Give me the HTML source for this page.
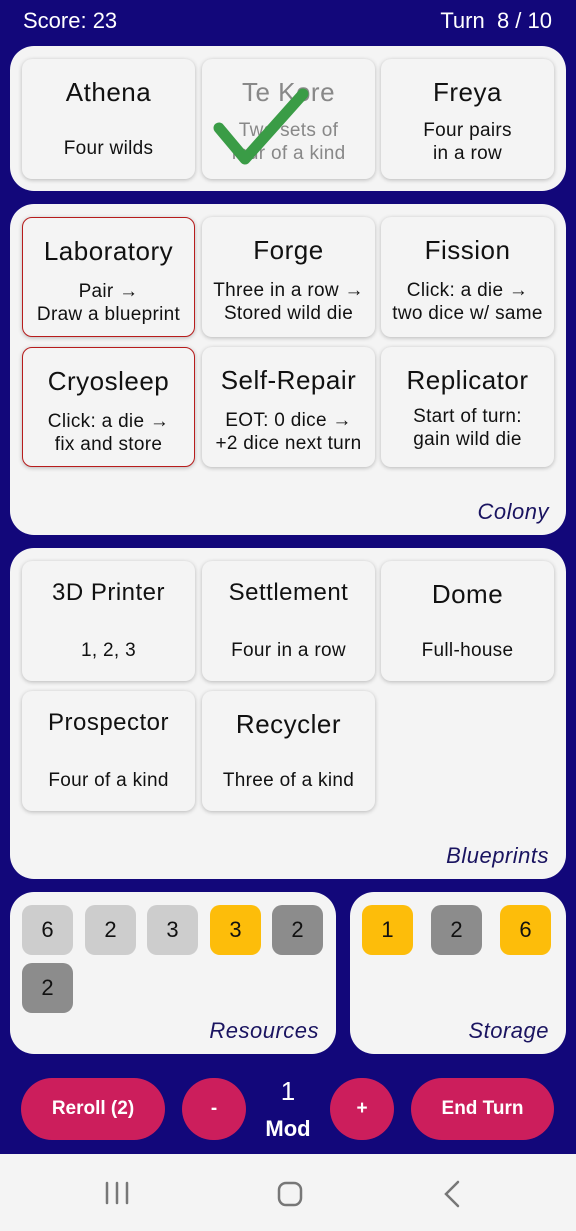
<!DOCTYPE html><html><head><style>
body{margin:0;width:576px;height:1231px;background:#12077a;font-family:"Liberation Sans",sans-serif;position:relative;overflow:hidden}
.a{position:absolute}
.p{position:absolute;background:#f4f4f4;border-radius:24px}
.c{position:absolute;width:173px;height:120px;background:#f4f4f4;border-radius:10px;box-shadow:0 1px 4px rgba(0,0,0,.25);text-align:center;color:#111}
.c .t{position:absolute;top:18px;left:0;right:0;font-size:26px;letter-spacing:.5px}
.c .s{position:absolute;left:0;right:0;font-size:19px;line-height:23px;letter-spacing:.3px}
.r{border:1.5px solid #b71c1c;box-sizing:border-box}
.lbl{position:absolute;font-style:italic;color:#1a1460;font-size:22px;letter-spacing:.5px}
.d{position:absolute;width:51px;height:50px;border-radius:10px;font-size:22px;text-align:center;line-height:50px;color:#111}
.l{background:#cdcdcd}.y{background:#fdbd0a}.g{background:#8c8c8c}
.b{position:absolute;background:#cc1e5c;color:#fff;text-align:center;font-weight:bold;font-size:19px;line-height:62px;height:62px;top:1078px}
</style></head><body>
<div class="a" style="left:23px;top:8px;color:#fff;font-size:22px">Score: 23</div>
<div class="a" style="right:24px;top:8px;color:#fff;font-size:22px">Turn&nbsp; 8 / 10</div>

<div class="p" style="left:10px;top:46px;width:556px;height:145px"></div>
<div class="c" style="left:22px;top:59px"><div class="t">Athena</div><div class="s" style="top:78px">Four wilds</div></div>
<div class="c" style="left:202px;top:59px;color:#888"><div class="t">Te Kore</div><div class="s" style="top:60px">Two sets of<br>four of a kind</div>
<svg class="a" style="left:0;top:0" width="173" height="120"><path d="M17 69 L43 100 L101 35" stroke="#3a9c46" stroke-width="11" fill="none" stroke-linecap="round" stroke-linejoin="round"/></svg></div>
<div class="c" style="left:381px;top:59px"><div class="t">Freya</div><div class="s" style="top:60px">Four pairs<br>in a row</div></div>

<div class="p" style="left:10px;top:204px;width:556px;height:331px"></div>
<div class="c r" style="left:22px;top:217px"><div class="t">Laboratory</div><div class="s" style="top:62px">Pair →<br>Draw a blueprint</div></div>
<div class="c" style="left:202px;top:217px"><div class="t">Forge</div><div class="s" style="top:62px">Three in a row →<br>Stored wild die</div></div>
<div class="c" style="left:381px;top:217px"><div class="t">Fission</div><div class="s" style="top:62px">Click: a die →<br>two dice w/ same</div></div>
<div class="c r" style="left:22px;top:347px"><div class="t">Cryosleep</div><div class="s" style="top:62px">Click: a die →<br>fix and store</div></div>
<div class="c" style="left:202px;top:347px"><div class="t">Self-Repair</div><div class="s" style="top:62px">EOT: 0 dice →<br>+2 dice next turn</div></div>
<div class="c" style="left:381px;top:347px"><div class="t">Replicator</div><div class="s" style="top:58px">Start of turn:<br>gain wild die</div></div>
<div class="lbl" style="right:27px;top:499px">Colony</div>

<div class="p" style="left:10px;top:548px;width:556px;height:331px"></div>
<div class="c" style="left:22px;top:561px"><div class="t" style="font-size:24px">3D Printer</div><div class="s" style="top:78px">1, 2, 3</div></div>
<div class="c" style="left:202px;top:561px"><div class="t" style="font-size:24px">Settlement</div><div class="s" style="top:78px">Four in a row</div></div>
<div class="c" style="left:381px;top:561px"><div class="t">Dome</div><div class="s" style="top:78px">Full-house</div></div>
<div class="c" style="left:22px;top:691px"><div class="t" style="font-size:24px">Prospector</div><div class="s" style="top:78px">Four of a kind</div></div>
<div class="c" style="left:202px;top:691px"><div class="t">Recycler</div><div class="s" style="top:78px">Three of a kind</div></div>
<div class="lbl" style="right:27px;top:843px">Blueprints</div>

<div class="p" style="left:10px;top:892px;width:326px;height:162px"></div>
<div class="d l" style="left:22px;top:905px">6</div>
<div class="d l" style="left:85px;top:905px">2</div>
<div class="d l" style="left:147px;top:905px">3</div>
<div class="d y" style="left:210px;top:905px">3</div>
<div class="d g" style="left:272px;top:905px">2</div>
<div class="d g" style="left:22px;top:963px">2</div>
<div class="lbl" style="right:257px;top:1018px">Resources</div>
<div class="p" style="left:350px;top:892px;width:216px;height:162px"></div>
<div class="d y" style="left:362px;top:905px">1</div>
<div class="d g" style="left:431px;top:905px">2</div>
<div class="d y" style="left:500px;top:905px">6</div>
<div class="lbl" style="right:27px;top:1018px">Storage</div>

<div class="b" style="left:21px;width:144px;border-radius:31px">Reroll (2)</div>
<div class="b" style="left:182px;width:64px;border-radius:32px">-</div>
<div class="a" style="left:258px;width:60px;top:1076px;text-align:center;color:#fff;font-size:26px">1</div>
<div class="a" style="left:248px;width:80px;top:1116px;text-align:center;color:#fff;font-size:22px;font-weight:bold">Mod</div>
<div class="b" style="left:330px;width:64px;border-radius:32px">+</div>
<div class="b" style="left:411px;width:143px;border-radius:31px">End Turn</div>

<div class="a" style="left:0;top:1154px;width:576px;height:77px;background:#f4f4f4"></div>
<svg class="a" style="left:0;top:1154px" width="576" height="77">
<g stroke="#777" stroke-width="2.5" fill="none" stroke-linecap="round">
<path d="M107 29v20M117 29v20M127 29v20"/>
<rect x="279" y="29" width="22" height="22" rx="7"/>
<path d="M458 28 L446 40 L458 52"/></g></svg>
</body></html>
